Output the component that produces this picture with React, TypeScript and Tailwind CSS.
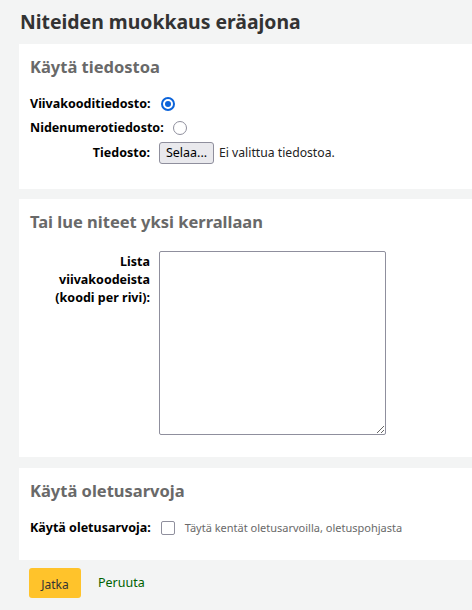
import React from "react";

const labelCls = "font-bold text-[12.5px] text-black";

export default function App() {
  return (
    <div className="min-h-[610px] w-[472px] overflow-hidden bg-[#f3f4f4] font-['Noto_Sans',sans-serif] text-[13px] text-[#111]">
      <h1 className="pl-[20px] pt-[6px] text-[19.4px] font-bold leading-[32px] text-[#333]">
        Niteiden muokkaus eräajona
      </h1>

      {/* Tiedosto */}
      <div className="ml-[19px] mt-[6px] h-[145px] bg-white pl-[11px] pt-[10px]">
        <h2 className="text-[16.5px] font-bold leading-[26px] text-[#696969]">Käytä tiedostoa</h2>
        <div className="mt-[15px] flex items-center gap-[10px] leading-[18px]">
          <span className={labelCls}>Viivakooditiedosto:</span>
          <span className="flex h-[14px] w-[14px] items-center justify-center rounded-full border-2 border-[#0b63da]">
            <span className="h-[6px] w-[6px] rounded-full bg-[#0b63da]" />
          </span>
        </div>
        <div className="mt-[6px] flex items-center gap-[9px] leading-[18px]">
          <span className={labelCls}>Nidenumerotiedosto:</span>
          <span className="h-[14px] w-[14px] rounded-full border-[1.5px] border-[#8f8f9d]" />
        </div>
        <div className="mt-[5px] flex items-center">
          <span className={`${labelCls} w-[120px] text-right`}>Tiedosto:</span>
          <button className="ml-[9px] h-[22px] w-[55px] rounded-[3px] border border-[#8f8f9d] bg-[#e9e9ed] text-[12.5px] text-black">
            Selaa...
          </button>
          <span className="ml-[5px] text-[12.2px] text-[#222]">Ei valittua tiedostoa.</span>
        </div>
      </div>

      {/* Yksi kerrallaan */}
      <div className="ml-[19px] mt-[10px] h-[258px] bg-white pl-[11px] pt-[10px]">
        <h2 className="text-[16.5px] font-bold leading-[26px] text-[#696969]">Tai lue niteet yksi kerrallaan</h2>
        <div className="mt-[16px] flex">
          <label className={`${labelCls} mt-[2px] w-[120px] text-right leading-[18px]`}>
            Lista viivakoodeista (koodi per rivi):
          </label>
          <textarea className="ml-[9px] h-[184px] w-[227px] resize rounded-[2px] border border-[#8f8f9d] bg-white" />
        </div>
      </div>

      {/* Oletusarvot */}
      <div className="ml-[19px] mt-[11px] h-[92px] bg-white pl-[11px] pt-[10px]">
        <h2 className="text-[16.5px] font-bold leading-[26px] text-[#696969]">Käytä oletusarvoja</h2>
        <div className="mt-[15px] flex items-center">
          <span className={labelCls}>Käytä oletusarvoja:</span>
          <span className="ml-[10px] h-[14px] w-[14px] rounded-[2px] border-[1.5px] border-[#8f8f9d]" />
          <span className="ml-[10px] text-[11px] text-[#696969]">Täytä kentät oletusarvoilla, oletuspohjasta</span>
        </div>
      </div>

      <div className="ml-[29px] mt-[8px] flex items-center gap-[17px]">
        <button className="h-[30px] w-[52px] rounded-[3px] bg-[#ffc32b] pt-[3px] text-[12px] text-[#333]">Jatka</button>
        <a className="text-[12.5px] text-[#006100]">Peruuta</a>
      </div>
    </div>
  );
}
